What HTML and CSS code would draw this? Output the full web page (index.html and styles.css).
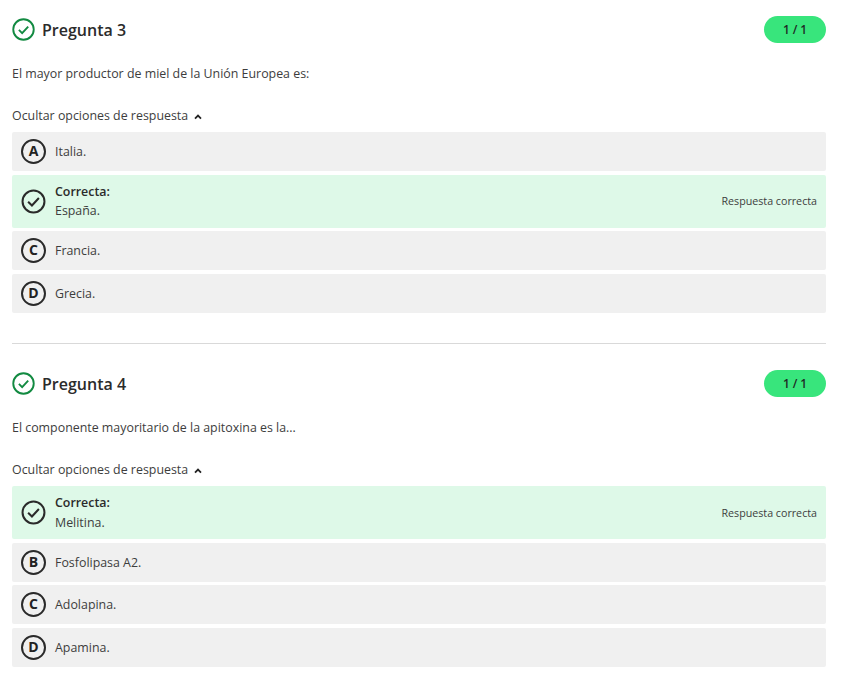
FILE: index.html
```html
<!DOCTYPE html>
<html lang="es">
<head>
    <meta charset="UTF-8">
    <meta name="viewport" content="width=device-width, initial-scale=1.0">
    <title>Preguntas</title>
    <link rel="stylesheet" href="styles.css">
</head>
<body>
    <section class="question">
        <header class="question-head">
            <svg class="status" viewBox="0 0 22 22"><circle cx="11" cy="11" r="9.8"/><path d="M6.6 11.4l3.1 3 5.8-6.2"/></svg>
            <h2>Pregunta 3</h2>
            <span class="score">1 / 1</span>
        </header>
        <p class="statement">El mayor productor de miel de la Unión Europea es:</p>
        <div class="toggle">Ocultar opciones de respuesta
            <svg class="caret" viewBox="0 0 8 6"><path d="M1 4.6l3-3 3 3"/></svg>
        </div>
        <ul class="options">
            <li class="option"><span class="letter">A</span><span>Italia.</span></li>
            <li class="option correct">
                <svg class="tick" viewBox="0 0 26 26"><circle cx="13" cy="13" r="11.4"/><path d="M7.4 13.2l4 4 7.2-7.8"/></svg>
                <div class="answer"><strong>Correcta:</strong><span>España.</span></div>
                <span class="note">Respuesta correcta</span>
            </li>
            <li class="option"><span class="letter">C</span><span>Francia.</span></li>
            <li class="option"><span class="letter">D</span><span>Grecia.</span></li>
        </ul>
    </section>
    <hr class="divider">
    <section class="question">
        <header class="question-head">
            <svg class="status" viewBox="0 0 22 22"><circle cx="11" cy="11" r="9.8"/><path d="M6.6 11.4l3.1 3 5.8-6.2"/></svg>
            <h2>Pregunta 4</h2>
            <span class="score">1 / 1</span>
        </header>
        <p class="statement">El componente mayoritario de la apitoxina es la...</p>
        <div class="toggle">Ocultar opciones de respuesta
            <svg class="caret" viewBox="0 0 8 6"><path d="M1 4.6l3-3 3 3"/></svg>
        </div>
        <ul class="options">
            <li class="option correct">
                <svg class="tick" viewBox="0 0 26 26"><circle cx="13" cy="13" r="11.4"/><path d="M7.4 13.2l4 4 7.2-7.8"/></svg>
                <div class="answer"><strong>Correcta:</strong><span>Melitina.</span></div>
                <span class="note">Respuesta correcta</span>
            </li>
            <li class="option"><span class="letter">B</span><span>Fosfolipasa A2.</span></li>
            <li class="option"><span class="letter">C</span><span>Adolapina.</span></li>
            <li class="option"><span class="letter">D</span><span>Apamina.</span></li>
        </ul>
    </section>
</body>
</html>
```

FILE: styles.css
```css
body {
    margin: 0;
    padding: 16px 22px 0 12px;
    background: #fff;
    color: #3d3d3d;
    font-family: "Open Sans", sans-serif;
    font-size: 12.4px;
}
.question-head {
    display: flex;
    align-items: center;
    height: 27px;
}
.status {
    width: 23px;
    height: 23px;
    margin-right: 7px;
    fill: none;
    stroke: #128a41;
    stroke-width: 1.8;
}
.question-head h2 {
    flex: 1;
    margin: 0;
    font-size: 16px;
    font-weight: 600;
    color: #2b2b2b;
}
.score {
    width: 62px;
    height: 27px;
    line-height: 27px;
    border-radius: 14px;
    background: #38e57c;
    text-align: center;
    font-size: 11.8px;
    font-weight: 600;
    color: #1f2a24;
}
.statement {
    margin: 22px 0 0;
    line-height: 18px;
}
.toggle {
    display: flex;
    align-items: center;
    gap: 6px;
    margin-top: 24px;
    line-height: 18px;
}
.caret {
    width: 8px;
    height: 6px;
    margin-top: 2px;
    fill: none;
    stroke: #222;
    stroke-width: 1.8;
}
.options {
    display: flex;
    flex-direction: column;
    gap: 3.5px;
    margin: 7px 0 0;
    padding: 0;
    list-style: none;
}
.option {
    display: flex;
    align-items: center;
    min-height: 39px;
    padding: 0 9px;
    border-radius: 2px;
    background: #f0f0f0;
}
.option.correct {
    min-height: 53px;
    background: #def9e8;
}
.letter {
    box-sizing: border-box;
    flex: none;
    width: 25px;
    height: 25px;
    margin-right: 9px;
    border: 2px solid #2a2a2a;
    border-radius: 50%;
    line-height: 20px;
    text-align: center;
    font-size: 14px;
    font-weight: 700;
    color: #222;
}
.tick {
    flex: none;
    width: 25px;
    height: 25px;
    margin-right: 9px;
    fill: none;
    stroke: #2a2a2a;
    stroke-width: 2.1;
}
.answer {
    display: flex;
    flex: 1;
    flex-direction: column;
    gap: 1.5px;
    padding-top: 1px;
    line-height: 18px;
}
.answer strong {
    font-weight: 600;
    color: #2b2b2b;
}
.note {
    font-size: 10.7px;
}
.divider {
    height: 1px;
    margin: 30px 0 26.5px;
    border: 0;
    background: #d9d9d9;
}
```
